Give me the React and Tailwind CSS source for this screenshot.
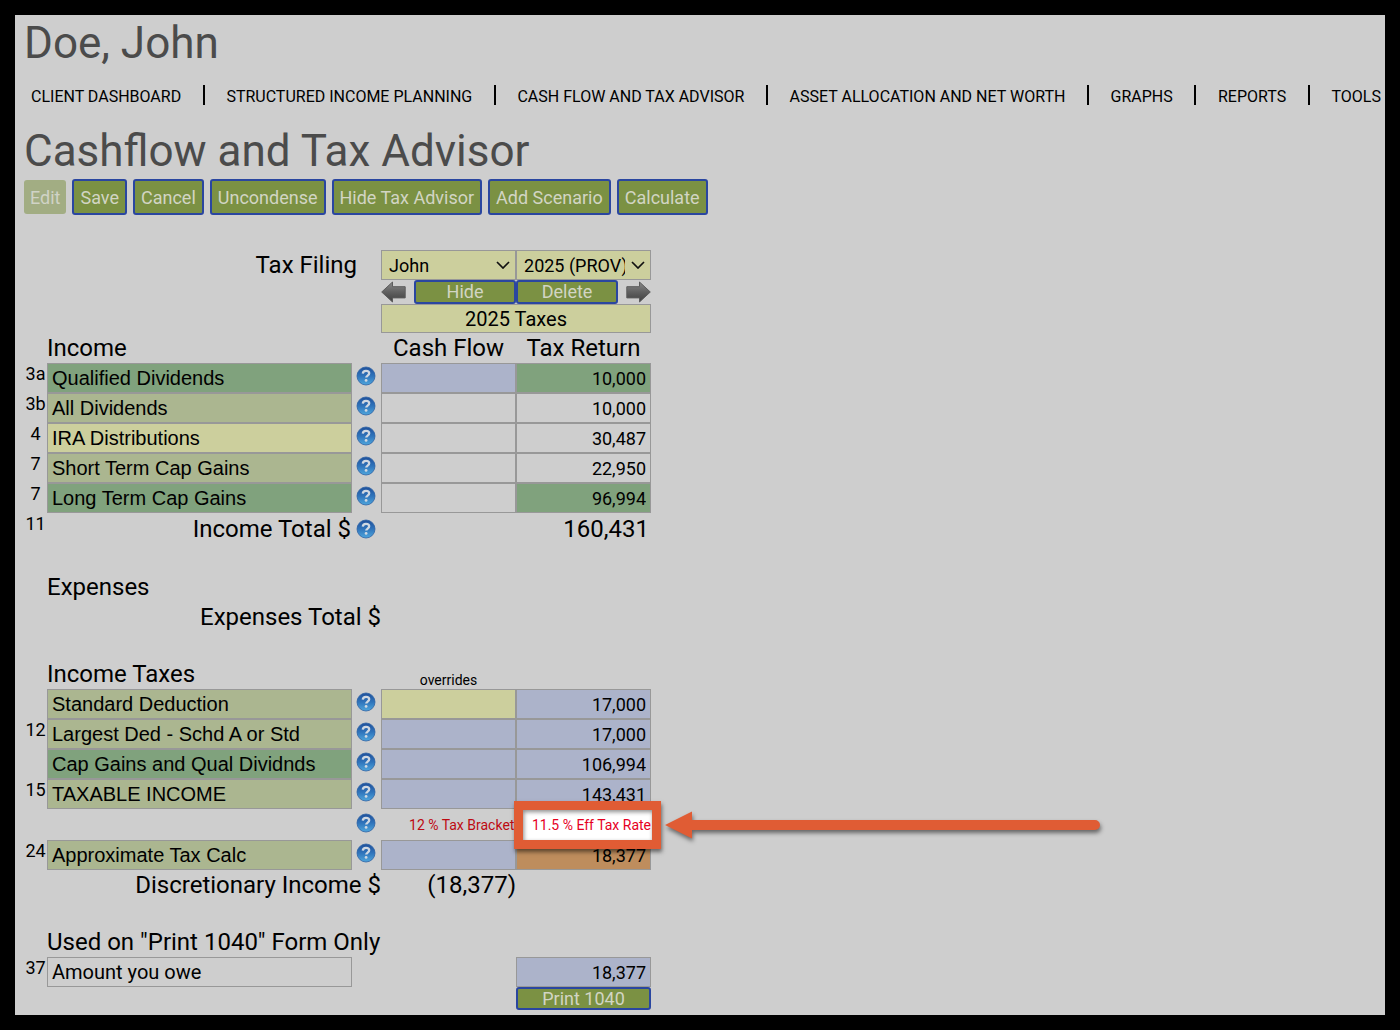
import React from "react";

const COLORS = {
  green: "bg-[#80a27d]",
  sage: "bg-[#abb690]",
  khaki: "bg-[#cccf9d]",
  blue: "bg-[#acb3ca]",
  plain: "bg-transparent",
  orange: "bg-[#be8d5d]",
};

const NAV = [
  "CLIENT DASHBOARD",
  "STRUCTURED INCOME PLANNING",
  "CASH FLOW AND TAX ADVISOR",
  "ASSET ALLOCATION AND NET WORTH",
  "GRAPHS",
  "REPORTS",
  "TOOLS",
];

const ACTIONS = ["Save", "Cancel", "Uncondense", "Hide Tax Advisor", "Add Scenario", "Calculate"];

const INCOME = [
  { line: "3a", label: "Qualified Dividends", tone: "green", cash: "blue", value: "10,000", tax: "green" },
  { line: "3b", label: "All Dividends", tone: "sage", cash: "plain", value: "10,000", tax: "plain" },
  { line: "4", label: "IRA Distributions", tone: "khaki", cash: "plain", value: "30,487", tax: "plain" },
  { line: "7", label: "Short Term Cap Gains", tone: "sage", cash: "plain", value: "22,950", tax: "plain" },
  { line: "7", label: "Long Term Cap Gains", tone: "green", cash: "plain", value: "96,994", tax: "green" },
];

const TAXES = [
  { line: "", label: "Standard Deduction", tone: "sage", cash: "khaki", value: "17,000", tax: "blue" },
  { line: "12", label: "Largest Ded - Schd A or Std", tone: "sage", cash: "blue", value: "17,000", tax: "blue" },
  { line: "", label: "Cap Gains and Qual Dividnds", tone: "green", cash: "blue", value: "106,994", tax: "blue" },
  { line: "15", label: "TAXABLE INCOME", tone: "sage", cash: "blue", value: "143,431", tax: "blue" },
];

function HelpIcon() {
  return (
    <svg viewBox="0 0 20 20" className="block size-5" aria-hidden="true">
      <defs>
        <linearGradient id="help" x1="0" y1="0" x2="0" y2="1">
          <stop offset="0" stopColor="#1f4f9a" />
          <stop offset="0.5" stopColor="#2f74bb" />
          <stop offset="1" stopColor="#4fa6dc" />
        </linearGradient>
      </defs>
      <circle cx="10" cy="10" r="9" fill="url(#help)" stroke="#2c62a4" strokeWidth="0.8" />
      <path d="M6.800 7.600C6.900 5.700 8.200 4.800 10 4.800c1.900 0 3.200 1 3.200 2.500 0 2.200-3 2.300-3 4.300" fill="none" stroke="#cfd8e2" strokeWidth="2.300" />
      <circle cx="10.100" cy="14.400" r="1.400" fill="#cfd8e2" />
    </svg>
  );
}

function HelpButton({ label }) {
  return (
    <button type="button" aria-label={`Help: ${label}`} className="ml-1 block">
      <HelpIcon />
    </button>
  );
}

function GrayArrow({ flipped }) {
  return (
    <svg viewBox="0 0 25 22" className={flipped ? "block h-[22px] w-[25px] -scale-x-100" : "block h-[22px] w-[25px]"} aria-hidden="true">
      <defs>
        <linearGradient id="metal" x1="0" y1="0" x2="0" y2="1">
          <stop offset="0" stopColor="#8a8a8a" />
          <stop offset="0.5" stopColor="#606060" />
          <stop offset="1" stopColor="#3f3f3f" />
        </linearGradient>
      </defs>
      <path d="M0.7 11 11.5 1v4.700h12.700v11.200H11.500V21z" fill="url(#metal)" stroke="#5c5c5c" strokeWidth="1" strokeLinejoin="round" />
    </svg>
  );
}

function FilingSelect({ label, value }) {
  return (
    <div className="relative">
      <select
        aria-label={label}
        defaultValue={value}
        className="block h-[30px] w-full appearance-none border border-[#989898] bg-[#cccf9d] pt-px pr-[25px] pl-[7px] text-[18px] leading-7 text-black"
      >
        <option>{value}</option>
      </select>
      <svg viewBox="0 0 14 8" className="pointer-events-none absolute top-[11px] right-1.5 h-2 w-3.5" aria-hidden="true">
        <path d="M1 1l6 6 6-6" fill="none" stroke="#111" strokeWidth="1.700" />
      </svg>
    </div>
  );
}

function SmallButton({ children, className }) {
  return (
    <button
      type="button"
      className={`block rounded-[3px] border-2 border-[#2a46a0] bg-[#7b9143] text-center text-[18px] leading-5 text-[#d2d5c4] ${className}`}
    >
      {children}
    </button>
  );
}

function ValueInput({ id, label, value, tone }) {
  return (
    <input
      id={id}
      aria-label={label}
      defaultValue={value}
      className={`block h-[30px] w-full border border-[#989898] pt-0.5 pr-1 pl-1 text-right text-[18px] text-black ${COLORS[tone]}`}
    />
  );
}

function LineNumber({ children }) {
  return <td className="text-center align-top text-[18px] leading-[22px]">{children}</td>;
}

function EntryRow({ row }) {
  const id = row.label.toLowerCase().replace(/[^a-z]+/g, "-");
  return (
    <tr className="h-[30px]">
      <LineNumber>{row.line}</LineNumber>
      <td>
        <label
          htmlFor={id}
          className={`block h-[30px] border border-[#989898] pl-1 font-['Liberation_Sans',sans-serif] text-[20px] leading-7 ${COLORS[row.tone]}`}
        >
          {row.label}
        </label>
      </td>
      <td className="pt-[3px] align-top">
        <HelpButton label={row.label} />
      </td>
      <td>
        <ValueInput label={`${row.label} cash flow`} value="" tone={row.cash} />
      </td>
      <td>
        <ValueInput id={id} value={row.value} tone={row.tax} />
      </td>
    </tr>
  );
}

function Callout() {
  return (
    <>
      <div className="absolute -top-2 -left-0.5 z-10 h-12 w-[147px] border-9 border-[#e05c34] bg-white shadow-[1px_3px_4px_rgba(0,0,0,0.5),inset_1px_2px_4px_rgba(0,0,0,0.45)]" />
      <svg
        viewBox="0 0 440 40"
        className="pointer-events-none absolute -top-1 left-[147px] z-10 h-10 w-[440px] drop-shadow-[1px_3px_2px_rgba(0,0,0,0.5)]"
        aria-hidden="true"
      >
        <path d="M2 20 29 6.500v8.500H432a5 5 0 0 1 0 10H29v8.500z" fill="#e05c34" />
      </svg>
    </>
  );
}

export default function App() {
  return (
    <div className="flex min-h-screen flex-col bg-black p-[15px] font-[Roboto,sans-serif] text-black">
      <main className="flex-1 overflow-hidden bg-[#cecece] pr-1 pb-[5px] pl-[9px]">
        <h1 className="pt-px text-[44px] leading-[54px] text-[#4b4b4b]">Doe, John</h1>
        <nav aria-label="Main" className="mt-[11px] flex h-8 items-center justify-between pl-[7px] text-[16px] whitespace-nowrap">
          {NAV.map((item, i) => (
            <React.Fragment key={item}>
              {i > 0 && <span className="mb-1 h-5 w-0.5 shrink-0 bg-black" />}
              <a href="#" className="shrink-0">
                {item}
              </a>
            </React.Fragment>
          ))}
        </nav>
        <h2 className="mt-[11px] text-[44px] leading-[55px] text-[#4b4b4b]">Cashflow and Tax Advisor</h2>
        <div className="flex items-center gap-1.5">
          <button type="button" disabled className="h-[34px] rounded-[3px] bg-[#a2ad83] px-1.5 text-[18px] text-[#d0d3c6]">
            Edit
          </button>
          {ACTIONS.map((name) => (
            <button
              key={name}
              type="button"
              className="h-9 rounded-[3px] border-2 border-[#2a46a0] bg-[#7b9143] px-1.5 text-[18px] text-[#d2d5c4]"
            >
              {name}
            </button>
          ))}
        </div>

        <table className="mt-[35px] w-[627px] table-fixed border-collapse text-[24px] leading-[30px]">
          <colgroup>
            <col className="w-[23px]" />
            <col className="w-[305px]" />
            <col className="w-[29px]" />
            <col className="w-[135px]" />
            <col className="w-[135px]" />
          </colgroup>
          <tbody>
            <tr className="h-[30px]">
              <td />
              <td colSpan={2} className="pr-6 text-right">
                Tax Filing
              </td>
              <td>
                <FilingSelect label="Filer" value="John" />
              </td>
              <td>
                <FilingSelect label="Tax year" value="2025 (PROV)" />
              </td>
            </tr>
            <tr className="h-6">
              <td colSpan={3} />
              <td colSpan={2}>
                <div className="flex items-center justify-between">
                  <button type="button" aria-label="Move left">
                    <GrayArrow />
                  </button>
                  <div className="flex">
                    <SmallButton className="h-6 w-[102px]">Hide</SmallButton>
                    <SmallButton className="h-6 w-[102px]">Delete</SmallButton>
                  </div>
                  <button type="button" aria-label="Move right">
                    <GrayArrow flipped />
                  </button>
                </div>
              </td>
            </tr>
            <tr className="h-[29px]">
              <td colSpan={3} />
              <td colSpan={2}>
                <input
                  aria-label="Scenario name"
                  defaultValue="2025 Taxes"
                  className="block h-[29px] w-full border border-[#989898] bg-[#cccf9d] text-center text-[20px]"
                />
              </td>
            </tr>
            <tr className="h-[30px]">
              <td />
              <th colSpan={2} className="text-left font-normal">
                Income
              </th>
              <th className="text-center font-normal">Cash Flow</th>
              <th className="text-center font-normal">Tax Return</th>
            </tr>
            {INCOME.map((row) => (
              <EntryRow key={row.label} row={row} />
            ))}
            <tr className="h-8">
              <LineNumber>11</LineNumber>
              <td className="pr-px text-right">Income Total $</td>
              <td>
                <HelpButton label="Income Total" />
              </td>
              <td />
              <td className="pr-0.5 text-right">160,431</td>
            </tr>
            <tr className="h-[57px] align-bottom">
              <td />
              <th colSpan={4} className="text-left font-normal">
                Expenses
              </th>
            </tr>
            <tr className="h-[29px]">
              <td />
              <td colSpan={2} className="text-right">
                Expenses Total $
              </td>
              <td colSpan={2} />
            </tr>
            <tr className="h-[57px] align-bottom">
              <td />
              <th colSpan={2} className="text-left font-normal">
                Income Taxes
              </th>
              <td className="text-center text-[14px] leading-[18px]">overrides</td>
              <td />
            </tr>
            {TAXES.map((row) => (
              <EntryRow key={row.label} row={row} />
            ))}
            <tr className="h-[31px] text-[14px]">
              <td colSpan={2} />
              <td className="pt-1 align-top">
                <HelpButton label="Tax Bracket" />
              </td>
              <td>
                <div className="overflow-hidden pl-7 whitespace-nowrap text-[#bd0a12]">12 % Tax Bracket</div>
              </td>
              <td className="relative">
                <Callout />
                <div className="relative z-20 text-right whitespace-nowrap text-[#e6001f]">11.5 % Eff Tax Rate</div>
              </td>
            </tr>
            <EntryRow row={{ line: "24", label: "Approximate Tax Calc", tone: "sage", cash: "blue", value: "18,377", tax: "orange" }} />
            <tr className="h-[30px]">
              <td />
              <td colSpan={2} className="text-right">
                Discretionary Income $
              </td>
              <td className="text-right">(18,377)</td>
              <td />
            </tr>
            <tr className="h-[57px] align-bottom">
              <td />
              <th colSpan={4} className="text-left font-normal">
                Used on "Print 1040" Form Only
              </th>
            </tr>
            <tr className="h-[30px]">
              <LineNumber>37</LineNumber>
              <td>
                <label htmlFor="amount-owed" className="block h-[30px] border border-[#989898] pl-1 text-[20px] leading-7">
                  Amount you owe
                </label>
              </td>
              <td colSpan={2} />
              <td>
                <ValueInput id="amount-owed" value="18,377" tone="blue" />
              </td>
            </tr>
            <tr className="h-[23px]">
              <td colSpan={4} />
              <td>
                <SmallButton className="h-[23px] w-full">Print 1040</SmallButton>
              </td>
            </tr>
          </tbody>
        </table>
      </main>
    </div>
  );
}
